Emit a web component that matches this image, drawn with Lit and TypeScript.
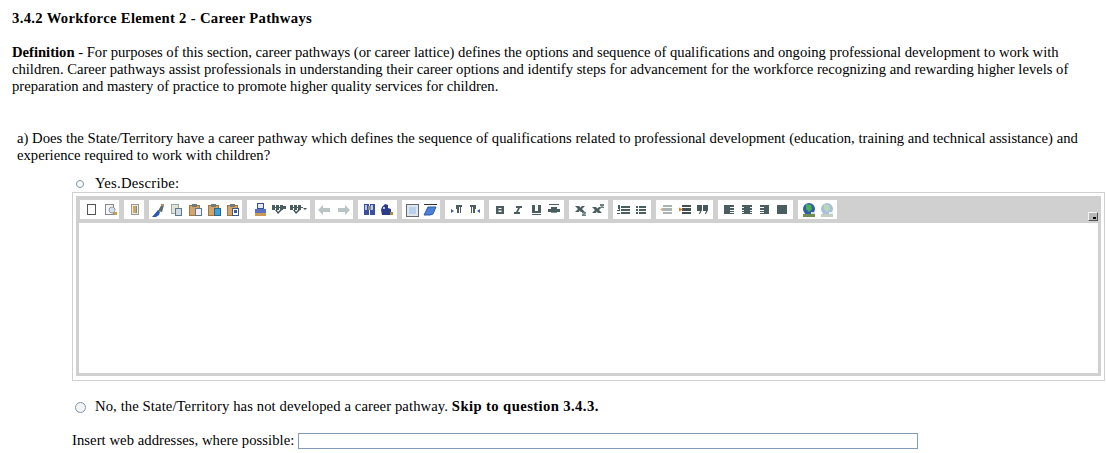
import { LitElement, html, css, svg } from "lit";
import { customElement } from "lit/decorators.js";

const N = "#4a5e60"; // dark slate of the format glyphs
const bar = (x: number, y: number, w: number, h: number, c = N) => svg`<rect x=${x} y=${y} width=${w} height=${h} fill=${c} />`;
const p = (d: string, f = N, s = "none") => svg`<path d=${d} fill=${f} stroke=${s} />`;
const clip = svg`${bar(6, 4, 5, 3, "#6e7a80")}`;

const ICONS: Record<string, unknown> = {
  newdoc: svg`<rect x="6.500" y="4.500" width="8" height="10" fill="#fff" stroke="#555" />`,
  preview: svg`<rect x="5.500" y="4.500" width="8" height="10" fill="#f6f6f6" stroke="#888" /><circle cx="12" cy="10" r="3" fill="#d8e0ee" stroke="#99a" />${bar(14, 12, 3, 3, "#c9a040")}`,
  template: svg`<rect x="6.500" y="4.500" width="7" height="10" fill="#ecece0" stroke="#999" />${bar(8, 6, 3, 7, "#c9a95a")}${bar(11, 6, 1, 7, "#7a8a99")}`,
  cut: svg`${p("M4 17l6-7 2 2-1 3-3 2z", "#2f55b5")}${p("M10 11l4-7 2 1-2 7z", "#5a6a70")}${bar(13, 4, 3, 2, "#b09060")}`,
  copy: svg`<rect x="4.500" y="4.500" width="7" height="9" fill="#e4e4d4" stroke="#9aa8a8" /><rect x="8.500" y="8.500" width="6" height="7" fill="#cfdce8" stroke="#5a7a8a" />`,
  paste: svg`<rect x="3.500" y="5.500" width="10" height="10" fill="#d4a468" stroke="#a07840" />${clip}<rect x="9.500" y="8.500" width="6" height="7" fill="#eef" stroke="#5a7a8a" />`,
  pastetext: svg`<rect x="3.500" y="5.500" width="10" height="10" fill="#d4a468" stroke="#a07840" />${clip}<rect x="9.500" y="8.500" width="6" height="7" fill="#3f9fd8" stroke="#25688f" />`,
  pasteword: svg`<rect x="3.500" y="5.500" width="10" height="10" fill="#d4a468" stroke="#a07840" />${clip}<rect x="8.500" y="8.500" width="6" height="7" fill="#fff" stroke="#3a5a8a" />${bar(10, 10, 3, 3, "#3a5a9a")}`,
  print: svg`${bar(7, 3, 7, 6, "#e8e8f4")}<rect x="7.500" y="3.500" width="6" height="5" fill="none" stroke="#3050a0" />${bar(5, 9, 11, 4, "#5a70c0")}${bar(5, 13, 11, 3, "#c99a50")}`,
  spell: svg`${bar(3, 5, 3, 5)}${bar(7, 5, 3, 5)}${bar(11, 5, 3, 5)}${bar(14, 6, 3, 3)}${bar(3, 7, 14, 1)}${p("M6 10l3 4 4-4h-2l-2 2-1-2z", "#3a5055")}`,
  spellmenu: svg`${bar(2, 5, 3, 5)}${bar(6, 5, 3, 5)}${bar(10, 5, 3, 5)}${bar(2, 7, 13, 1)}${p("M5 10l3 4 4-4h-2l-2 2-1-2z", "#3a5055")}${p("M15 8h4l-2 2z", "#3a5055")}`,
  undo: svg`${p("M3 10l5-5v3h7v4H8v3z", "#b9c4c4")}`,
  redo: svg`${p("M16 10l-5-5v3H4v4h7v3z", "#b9c4c4")}`,
  find: svg`${bar(5, 4, 5, 11, "#3a4fa0")}${bar(11, 4, 5, 11, "#3a4fa0")}${bar(9, 6, 3, 4, "#8a8a90")}${bar(6, 5, 2, 5, "#b8c8e8")}${bar(12, 5, 2, 5, "#b8c8e8")}`,
  replace: svg`${p("M7 4l3 1v3l3 1v3l2 0v3H4l-1-5 1-3z", "#2c3a8a")}${bar(5, 7, 2, 2, "#b8c8e8")}${bar(12, 12, 3, 3, "#a88a40")}`,
  selall: svg`<rect x="4.500" y="4.500" width="12" height="12" fill="#dfe6e6" stroke="#667" />${bar(7, 7, 7, 7, "#b8cfee")}`,
  erase: svg`${bar(3, 4, 13, 1, "#333")}${p("M3 15l4-8h8l-3 7-3 1z", "#4a80d8", "#2f5ca8")}`,
  ltr: svg`${p("M10 5h6v2h-1v6h-1V7h-1v6h-2V9h-1z")}${p("M5 9l3 2-3 2z", "#3a5bb0")}`,
  rtl: svg`${p("M5 5h6v4h-1v4H8V7H7v6H6V7H5z")}${p("M15 9l-3 2 3 2z", "#3a5bb0")}`,
  bold: svg`${p("M7 6h8v8H7zM9.500 8v1h3V8zm0 2.500v1.500h3v-1.500z")}`,
  italic: svg`${p("M8 6h6v2h-2l-2 4h2v2H6v-2h2l2-4H8z")}`,
  underline: svg`${p("M5 5h3v6h3V5h3v8H5z")}${bar(5, 14, 9, 1)}`,
  strike: svg`${bar(3, 4, 10, 1)}${bar(2, 9, 12, 3)}${bar(5, 7, 6, 2)}${bar(5, 12, 6, 1, "#7b8c8c")}`,
  sub: svg`${p("M5 6h4l1.500 1.500L12 6h3l-3 3 3 3h-4l-1.500-1.500L9 12H5l3-3z")}${p("M12 12h4v1.500l-2 1h2V16h-4v-1.500l2-1h-2z", "#6d8080")}`,
  sup: svg`${p("M3 7h4l1.500 1.500L10 7h3l-3 3 3 3h-4l-1.500-1.500L7 13H3l3-3z")}${p("M11 4h4v2l-2 1h2v1h-4V7l2-1h-2z", "#6d8080")}`,
  ol: svg`${bar(5, 5, 2, 4)}${bar(4, 10, 3, 1)}${bar(4, 13, 3, 1)}${bar(6, 8, 1, 2)}${bar(8, 6, 9, 2)}${bar(8, 9, 9, 2)}${bar(8, 12, 9, 2)}`,
  ul: svg`${bar(4, 6, 10, 2)}${bar(4, 9, 10, 2)}${bar(4, 12, 10, 2)}${bar(6, 6, 1, 8, "#fff")}`,
  outdent: svg`${p("M7 5h9v9H7z", "#a9b3b3")}${bar(7, 7, 9, 1, "#fff")}${bar(7, 11, 9, 1, "#fff")}${p("M4 9.500l3-2v4z", "#e0b080")}`,
  indent: svg`${p("M7 5h9v9H7z", "#3f5052")}${bar(7, 7, 9, 1, "#fff")}${bar(7, 11, 9, 1, "#fff")}${p("M8 9.500l-4-2v4z", "#d98030")}`,
  quote: svg`${p("M3 5h5v5l-2 4H5l1-3H3zM9 5h5v5l-2 4h-1l1-3H9z", "#46585c")}`,
  al: svg`${bar(6, 5, 10, 9)}${bar(12, 7, 4, 1, "#fff")}${bar(12, 10, 4, 1, "#fff")}${bar(12, 12, 4, 1, "#fff")}`,
  ac: svg`${bar(5, 5, 10, 9)}${bar(5, 7, 2, 1, "#fff")}${bar(13, 7, 2, 1, "#fff")}${bar(5, 10, 2, 1, "#fff")}${bar(13, 10, 2, 1, "#fff")}${bar(5, 12, 2, 1, "#fff")}${bar(13, 12, 2, 1, "#fff")}`,
  ar: svg`${bar(4, 5, 9, 9)}${bar(4, 7, 4, 1, "#fff")}${bar(4, 10, 4, 1, "#fff")}${bar(4, 12, 4, 1, "#fff")}`,
  aj: svg`${bar(2, 5, 10, 9)}`,
  link: svg`<circle cx="10" cy="9" r="6" fill="#2f5fa8" />${p("M7 4l5 1 1 4-3 3-3-3z", "#4caf50")}${bar(4, 14, 12, 3, "#6f8f50")}${bar(12, 12, 4, 2, "#ddd")}`,
  unlink: svg`<circle cx="9" cy="9" r="6" fill="#a8c0dc" />${p("M6 4l5 1 1 4-3 3-3-3z", "#b8d8b8")}${bar(3, 14, 12, 3, "#c3cfc0")}${bar(11, 12, 4, 2, "#eee")}`,
};

const GROUPS: { w: number; icons: string[] }[] = [
  { w: 39, icons: ["newdoc", "preview"] },
  { w: 20, icons: ["template"] },
  { w: 93, icons: ["cut", "copy", "paste", "pastetext", "pasteword"] },
  { w: 63, icons: ["print", "spell", "spellmenu"] },
  { w: 38, icons: ["undo", "redo"] },
  { w: 39, icons: ["find", "replace"] },
  { w: 38, icons: ["selall", "erase"] },
  { w: 39, icons: ["ltr", "rtl"] },
  { w: 75, icons: ["bold", "italic", "underline", "strike"] },
  { w: 39, icons: ["sub", "sup"] },
  { w: 38, icons: ["ol", "ul"] },
  { w: 57, icons: ["outdent", "indent", "quote"] },
  { w: 75, icons: ["al", "ac", "ar", "aj"] },
  { w: 39, icons: ["link", "unlink"] },
];

@customElement("app-root")
export class AppRoot extends LitElement {
  static styles = css`
    :host {
      display: block;
      width: 1106px;
      height: 453px;
      overflow: hidden;
      box-sizing: border-box;
      padding: 10px 0 0 12px;
      background: #fff;
      color: #000;
      font: 14.67px/17px "Liberation Serif", "Times New Roman", serif;
    }
    h1 {
      margin: 0;
      font: bold 14.67px/17px "Liberation Serif", serif;
      letter-spacing: 0.32px;
    }
    .def {
      margin: 17px 0 0;
      width: 1070px;
      letter-spacing: -0.015px;
    }
    .q {
      margin: 35px 0 0 5px;
      width: 1080px;
      letter-spacing: 0.012px;
    }
    .opt {
      display: flex;
      align-items: center;
    }
    .yes {
      margin: 11px 0 0 62px;
      height: 17px;
      letter-spacing: 0.25px;
    }
    .radio {
      box-sizing: border-box;
      border-radius: 50%;
      background: #fff;
      flex: none;
    }
    .r1 {
      width: 8px;
      height: 8px;
      margin: 1px 11px 0 2px;
      border: 1px solid #7f97a8;
    }
    .r2 {
      width: 11px;
      height: 11px;
      margin: 1px 9px 0 1px;
      border: 1.5px solid #7d97ad;
      background: #f4f4f4;
    }
    .box {
      box-sizing: border-box;
      width: 1033px;
      height: 189px;
      margin: 0 0 0 60px;
      border: 1px solid #d0d0d0;
      padding: 3px 3px 4px 3px;
    }
    .editor {
      box-sizing: border-box;
      height: 100%;
      border: 3px solid #d0d0d0;
      border-top: 0;
      display: flex;
      flex-direction: column;
      background: #fff;
    }
    .toolbar {
      box-sizing: border-box;
      height: 27px;
      background: #d0d0d0;
      margin: 0 -3px 0 -3px;
      display: flex;
      gap: 5px;
      padding: 4px 0 4px 4px;
      flex: none;
    }
    .group {
      display: flex;
      background: #fff;
      justify-content: center;
      align-items: center;
      height: 19px;
    }
    .group svg {
      display: block;
      width: 19px;
      height: 19px;
      flex: none;
      filter: blur(0.3px);
    }
    .handle {
      box-sizing: border-box;
      width: 10px;
      height: 9px;
      margin: 12px 3px 0 auto;
      border: 1px solid #555;
      border-top-color: #f4f4f4;
      border-left-color: #f4f4f4;
      background: #b8b8b8;
      display: flex;
      align-items: flex-end;
      justify-content: flex-end;
    }
    .handle i {
      display: block;
      width: 3px;
      height: 2px;
      margin: 0 1px 1px 0;
      background: #000;
    }
    .no {
      margin: 17px 0 0 62px;
      height: 17px;
      letter-spacing: 0.1px;
    }
    .no b {
      letter-spacing: 0.4px;
    }
    .web {
      display: flex;
      align-items: center;
      margin: 17px 0 0 60px;
      letter-spacing: 0.06px;
    }
    .field {
      box-sizing: border-box;
      width: 620px;
      height: 16px;
      margin-left: 4px;
      border: 1px solid #7f9db9;
      background: #fff;
    }
  `;

  render() {
    return html`
      <h1>3.4.2 Workforce Element 2 - Career Pathways</h1>
      <p class="def"><b>Definition</b> - For purposes of this section, career pathways (or career lattice) defines the options and sequence of qualifications and ongoing professional development to work with children. Career pathways assist professionals in understanding their career options and identify steps for advancement for the workforce recognizing and rewarding higher levels of preparation and mastery of practice to promote higher quality services for children.</p>
      <p class="q">a) Does the State/Territory have a career pathway which defines the sequence of qualifications related to professional development (education, training and technical assistance) and experience required to work with children?</p>
      <div class="opt yes"><span class="radio r1"></span><span>Yes.Describe:</span></div>
      <div class="box">
        <div class="editor">
          <div class="toolbar">
            ${GROUPS.map(
              (g) => html`<div class="group" style="width:${g.w}px">
                ${g.icons.map((i) => html`<svg viewBox="0 0 19 19">${ICONS[i]}</svg>`)}
              </div>`
            )}
            <div class="handle"><i></i></div>
          </div>
        </div>
      </div>
      <div class="opt no"><span class="radio r2"></span><span>No, the State/Territory has not developed a career pathway. <b>Skip to question 3.4.3.</b></span></div>
      <div class="web"><span>Insert web addresses, where possible:</span><span class="field"></span></div>
    `;
  }
}
